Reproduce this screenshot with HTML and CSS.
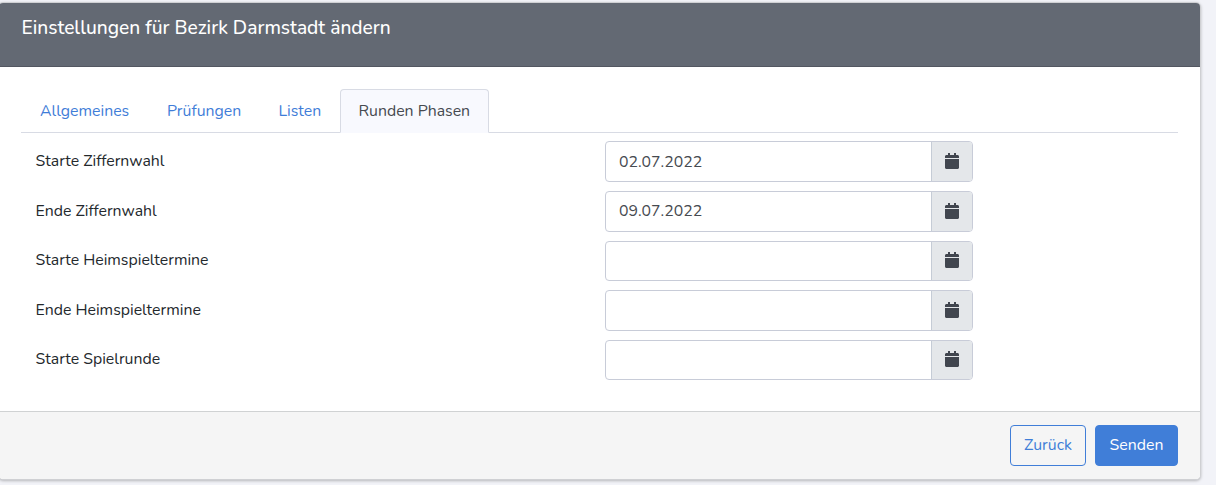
FILE: index.html
```
<!DOCTYPE html>
<html lang="de">
<head>
<meta charset="utf-8">
<title>Einstellungen für Bezirk Darmstadt ändern</title>
<link rel="stylesheet" href="styles.css">
</head>
<body>
<svg class="sprite" aria-hidden="true">
  <symbol id="calendar" viewBox="0 0 448 512"><path d="M12 192h424c6.600 0 12 5.400 12 12v260c0 26.500-21.500 48-48 48H48c-26.500 0-48-21.500-48-48V204c0-6.600 5.400-12 12-12zm436-44v-36c0-26.500-21.500-48-48-48h-48V12c0-6.600-5.400-12-12-12h-40c-6.600 0-12 5.400-12 12v52H160V12c0-6.600-5.400-12-12-12h-40c-6.600 0-12 5.400-12 12v52H48C21.500 64 0 85.500 0 112v36c0 6.600 5.400 12 12 12h424c6.600 0 12-5.400 12-12z"/></symbol>
</svg>
<main class="card">
  <header class="card-header"><h1 class="title">Einstellungen für Bezirk Darmstadt ändern</h1></header>
  <div class="card-body">
    <nav class="tabs">
      <a class="tab general">Allgemeines</a>
      <a class="tab checks">Prüfungen</a>
      <a class="tab lists">Listen</a>
      <a class="tab active">Runden Phasen</a>
    </nav>
    <div class="form">
      <div class="row"><label class="label">Starte Ziffernwahl</label><div class="group"><div class="input">02.07.2022</div><div class="addon"><svg class="icon"><use href="#calendar"/></svg></div></div></div>
      <div class="row"><label class="label">Ende Ziffernwahl</label><div class="group"><div class="input">09.07.2022</div><div class="addon"><svg class="icon"><use href="#calendar"/></svg></div></div></div>
      <div class="row short"><label class="label">Starte Heimspieltermine</label><div class="group"><div class="input"></div><div class="addon"><svg class="icon"><use href="#calendar"/></svg></div></div></div>
      <div class="row"><label class="label">Ende Heimspieltermine</label><div class="group"><div class="input"></div><div class="addon"><svg class="icon"><use href="#calendar"/></svg></div></div></div>
      <div class="row short"><label class="label">Starte Spielrunde</label><div class="group"><div class="input"></div><div class="addon"><svg class="icon"><use href="#calendar"/></svg></div></div></div>
    </div>
  </div>
  <footer class="card-footer">
    <button class="btn btn-back">Zurück</button>
    <button class="btn btn-send">Senden</button>
  </footer>
</main>
</body>
</html>
```
FILE: styles.css
```
* { box-sizing: border-box; }
body {
  margin: 0;
  height: 485px;
  padding-top: 2px;
  overflow: hidden;
  background: #f2f3f8;
  font-family: Nunito, Lato, sans-serif;
  font-size: 15.840px;
  line-height: 24px;
  color: #23282c;
}
.sprite { display: none; }
.card {
  display: flex;
  flex-direction: column;
  width: 1203px;
  height: 478px;
  margin-left: -2px;
  border: 1px solid #cfd0d3;
  border-radius: 5px;
  background: #fff;
  box-shadow: 0 1px 3px rgba(0, 0, 0, .25);
}
.card-header {
  height: 64px;
  padding: 13px 22.500px;
  border-bottom: 1px solid #535761;
  border-radius: 4px 4px 0 0;
  background: #636973;
  color: #fff;
}
.title { margin: 0; font-size: 19.170px; line-height: 24px; font-weight: 500; white-space: nowrap; }
.card-body { height: 344px; padding: 22px 22px 0 22px; }
.tabs { display: flex; height: 44px; border-bottom: 1px solid #d8dbe4; }
.tab { height: 44px; padding: 10px 0 0 19px; color: #3f7dd8; white-space: nowrap; }
.general { width: 127px; }
.checks { width: 111.500px; }
.lists { width: 80.500px; }
.active {
  width: 149px;
  padding: 9px 0 0 17.500px;
  border: 1px solid #d8dbe4;
  border-bottom-color: #f8f9fe;
  border-radius: 4px 4px 0 0;
  background: #f8f9fe;
  color: #464a50;
}
.form { display: flex; flex-direction: column; gap: 9px; padding: 8px 0 0 14.500px; }
.row { display: flex; height: 41px; }
.label { width: 569.500px; padding-top: 8px; }
.short { height: 40px; }
.short .label { padding-top: 7px; }
.group { display: flex; width: 368px; border: 1px solid #c8ccd8; border-radius: 4px; overflow: hidden; }
.input { flex: 1; padding: 7px 13px; color: #464a50; }
.row:first-child .input { padding-top: 8px; }
.addon { display: flex; justify-content: center; width: 41px; padding-top: 11px; border-left: 1px solid #c5ccd6; background: #e4e7ea; color: #41464f; }
.short .addon { padding-top: 10px; }
.icon { width: 14px; height: 16px; fill: currentColor; }
.card-footer { display: flex; justify-content: flex-end; gap: 9px; flex: 1; padding: 13px 22px; border-top: 1px solid #d0d2d3; border-radius: 0 0 4px 4px; background: #f5f5f5; }
.btn { height: 41px; padding: 0 0 1px; border: 1px solid #407ed8; border-radius: 4px; font: inherit; }
.btn-back { width: 76px; background: transparent; color: #407ed8; }
.btn-send { width: 83px; background: #407ed8; color: #fff; }
```
